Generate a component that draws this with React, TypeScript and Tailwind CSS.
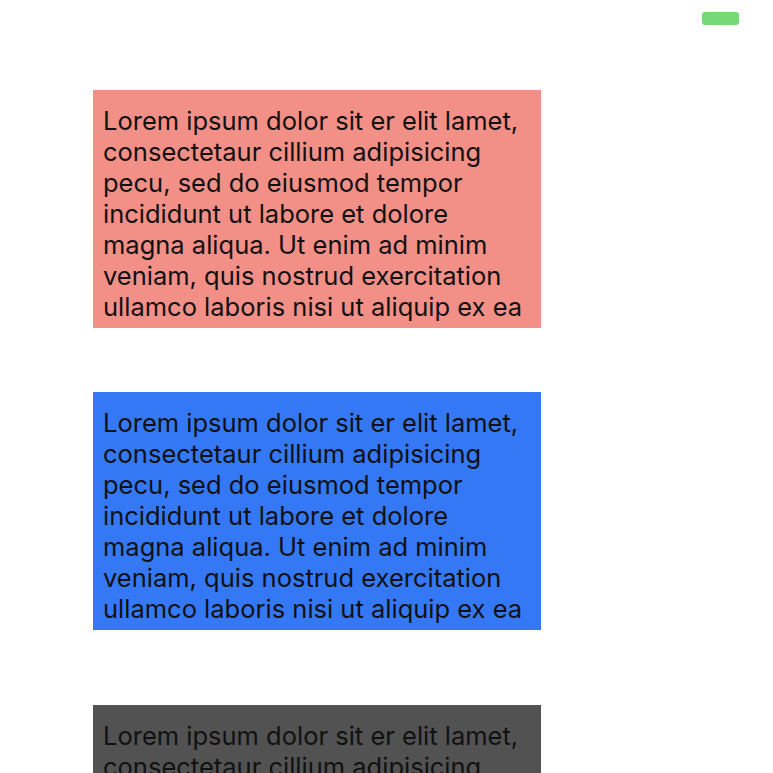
import React from 'react';

const LINES = [
  'Lorem ipsum dolor sit er elit lamet,',
  'consectetaur cillium adipisicing',
  'pecu, sed do eiusmod tempor',
  'incididunt ut labore et dolore',
  'magna aliqua. Ut enim ad minim',
  'veniam, quis nostrud exercitation',
  'ullamco laboris nisi ut aliquip ex ea',
];

const Box: React.FC<{ color: string; className?: string }> = ({ color, className = '' }) => (
  <div className={`w-[448px] shrink-0 pl-[10px] pt-[15px] pb-[6px] ${color} ${className}`}>
    <p className="text-[25.5px] leading-[31px] text-[#111111]">
      {LINES.map((l, i) => (
        <span key={i} className="block whitespace-nowrap">
          {l}
        </span>
      ))}
    </p>
  </div>
);

const App: React.FC = () => {
  return (
    <div
      className="h-[773px] bg-white overflow-hidden"
      style={{ fontFamily: 'Inter, "Noto Sans", sans-serif' }}
    >
      {/* top bar */}
      <div className="flex justify-end pt-[12px] pr-[34px]">
        <div className="w-[37px] h-[13px] rounded-[3px] bg-[#77d877]" />
      </div>

      {/* content */}
      <div className="flex flex-col pl-[93px] pt-[65px]">
        <Box color="bg-[#f29088]" />
        <Box color="bg-[#3578f5]" className="mt-[64px]" />
        <Box color="bg-[#525252]" className="mt-[75px]" />
      </div>
    </div>
  );
};

export default App;
